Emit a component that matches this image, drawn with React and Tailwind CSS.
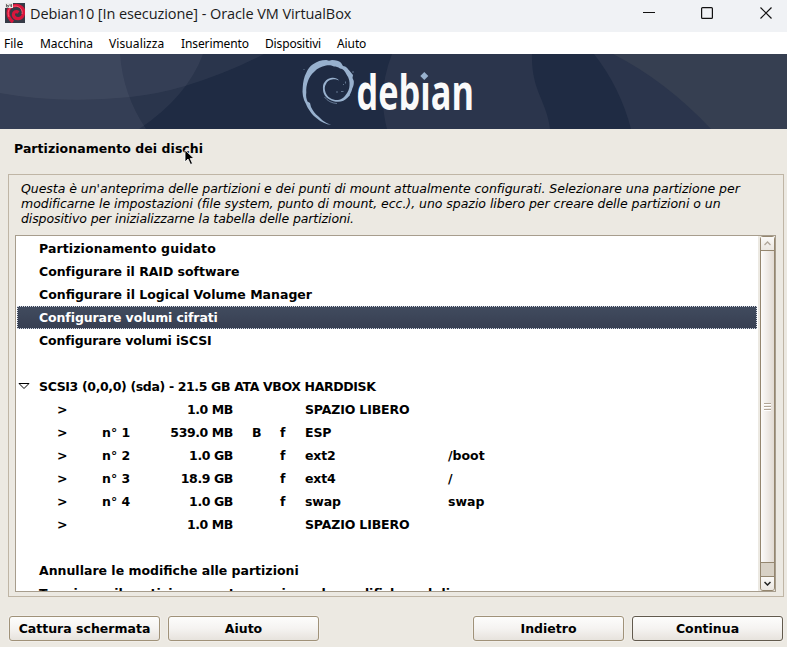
import React from "react";

function Banner() {
  return (
    <svg className="block h-[75px] w-full shrink-0" viewBox="0 0 787 75">
      <rect width="787" height="75" fill="#1f2b43" />
      <path d="M0 0H264Q228 19 185 32Q158 40 130 43Q60 50 0 39Z" fill="#aeb3bd" fillOpacity=".08" />
      <path d="M0 0H203Q187 43 139 75H0Z" fill="#aeb3bd" fillOpacity=".08" />
      <path d="M0 0H120Q123 41 146 75H0Z" fill="#aeb3bd" fillOpacity=".08" />
      <path d="M392 0Q377 38 387 75H550C547 47 531 37 532 0Z" fill="#2b354c" />
      <path d="M594 0Q620 33 631 75H787V0Z" fill="#2b354c" />
      <path d="M613 0Q666 27 711 75H787V0Z" fill="#363f51" />
      <path
        d="M331.300 70.700C326 70.500 321 68 317 64.500C312 61 308 55 306 50C303 45 302 39 302.700 33.700C303 28 304 23 306.300 18.700C308 15 310 12 313 10.300C317 7.500 321 6 326.300 6L329 6.700L332 6C336 6 339 7 341 8.800L343 12C346 12 348 15 349.700 17L353 21L352.500 24L353.800 27C354 30 353.500 32 352.300 34.500C351.500 38 350 41 348 43.200C345 46.500 342 47.500 338 47.800C335 47.800 332 47 329.500 45.500C325 43 323 39 323 35.500C322.800 32 323 30 324.700 28C326.500 25.500 329 24 332 23.800C335 23.500 337.500 24.500 339 26.500C336 25 334 25 332 25.500C329 26 327 27.500 326 30C324.800 32 324.500 34 325 36.500C325.800 40 327.500 42.500 330 44C333 45.800 335.500 46.300 338 46C341 45.500 343.500 44 345.300 41.500C348 38 349.500 35 349.500 31.500C349.900 28 349.200 24 346.500 20.500C345 17 343 14.800 340 14.500C338 13 336 12.500 334 12.500C331 11 328.500 11 326 11.600C321 12.500 317.500 14.500 314.500 17.500C311 20.500 309 24 308 27C306.500 31 306 35 306.300 38.500C305.700 42 306.500 45 307.500 47.500L310 49L311 53C313 57 315 60 318.500 62.500C322 66 325 69 331.300 70.700Z"
        fill="#98b1ce"
      />
      <path d="M324.500 43Q329 49 337 49.500M336 38h2M341 37.500h2.500M343 30.500h1M345.500 27.500v2M303.500 16l1-1M353 17v2M347 43l3-2" stroke="#98b1ce" strokeOpacity=".7" strokeWidth=".8" fill="none" />
      <text
        x="356.500" y="56" textLength="117.500" lengthAdjust="spacingAndGlyphs"
        className="font-['Open_Sans',sans-serif] text-[49px] font-bold" fill="#fafafa"
      >debian</text>
      <path d="M418 15h12v12.500h-12z" fill="#2b354c" />
      <path d="M424.300 18l4 4-4 4-4-4z" fill="#98b1ce" />
    </svg>
  );
}

function TitleBar() {
  return (
    <div className="flex h-8 shrink-0 items-start bg-[#f0f2f5]">
      <svg className="ml-[5px] mt-[3px] h-5 w-5" viewBox="0 0 20 20">
        <rect width="20" height="20" fill="#363b47" />
        <path d="M8 19C1 13 2 5 8 3C14 1 20 5 18.500 11C17 17 10 17 8.500 12.500C8 9 11 7.500 13.500 9.500" fill="none" stroke="#d9163c" strokeWidth="3.200" />
        <path d="M4 14C1.500 8 5 3.500 10 3C15 3 18 7 17 11" fill="none" stroke="#ff5872" strokeWidth="1" />
        <rect width="8" height="5" fill="#e8e8e8" />
        <path d="M1.500 1v3h2v-1.500h-2M5 1v2h2M6.500 1v3" fill="none" stroke="#555" strokeWidth=".8" />
      </svg>
      <span className="ml-[5px] mt-[4px] whitespace-nowrap font-['Open_Sans',sans-serif] text-[14.500px] leading-5 tracking-[-0.08px] text-[#1b1b1b]">Debian10 [In esecuzione] - Oracle VM VirtualBox</span>
      <svg className="ml-auto h-8 w-36" viewBox="0 0 144 32" fill="none" stroke="#111">
        <path d="M0 12.500h12" />
        <rect x="58.600" y="7.600" width="10.800" height="10.800" rx="1" strokeWidth="1.200" />
        <path d="M117.500 7.500l11 11m0-11l-11 11" strokeWidth="1.200" />
      </svg>
    </div>
  );
}

function MenuBar() {
  return (
    <div className="flex h-[22px] shrink-0 items-center whitespace-nowrap bg-white pl-1 pt-0.5 font-['Noto_Sans',sans-serif] text-[12px] leading-[22px] text-black">
      <span className="w-9">File</span>
      <span className="w-[69px] tracking-[-0.1px]">Macchina</span>
      <span className="w-[72px] tracking-[0.1px]">Visualizza</span>
      <span className="w-[84px] tracking-[-0.1px]">Inserimento</span>
      <span className="w-[72px] tracking-[-0.15px]">Dispositivi</span>
      <span className="tracking-[-0.1px]">Aiuto</span>
    </div>
  );
}

const partitions = [
  ["", "1.0 MB", "", "", "SPAZIO LIBERO", ""],
  ["n° 1", "539.0 MB", "B", "f", "ESP", ""],
  ["n° 2", "1.0 GB", "", "f", "ext2", "/boot"],
  ["n° 3", "18.9 GB", "", "f", "ext4", "/"],
  ["n° 4", "1.0 GB", "", "f", "swap", "swap"],
  ["", "1.0 MB", "", "", "SPAZIO LIBERO", ""],
];

function Row({ children, className = "" }) {
  return <div className={`h-[23px] pl-[22px] ${className}`}>{children}</div>;
}

function Partition({ cells }) {
  const [number, size, boot, use, type, mount] = cells;
  return (
    <div className="flex h-[23px] pl-10">
      <span className="w-[45px]">&gt;</span>
      <span className="w-[46px]">{number}</span>
      <span className="w-[85px] text-right tracking-[-0.4px]">{size}</span>
      <span className="ml-[19px] w-7">{boot}</span>
      <span className="w-[25px]">{use}</span>
      <span className="w-[143px] tracking-[-0.15px]">{type}</span>
      <span>{mount}</span>
    </div>
  );
}

function Scrollbar() {
  return (
    <div className="flex w-[18px] shrink-0 bg-[#ece9e2] pl-0.5">
      <div className="flex w-[15px] flex-col rounded-[3px] border border-[#94866f] bg-[#d8d1c5]">
        <div className="flex h-[14px] items-center justify-center border-b border-[#94866f] bg-gradient-to-b from-[#faf9f7] to-[#ebe7e1]">
          <svg className="h-[5px] w-[7px]" viewBox="0 0 7 5"><path d="M.5 4l3-3 3 3" fill="none" stroke="#b0a79a" strokeWidth="1.300" /></svg>
        </div>
        <div className="flex h-[312px] flex-col items-center justify-center gap-0.5 border-b border-[#94866f] bg-gradient-to-r from-[#fcfbfa] to-[#e2dbd3]">
          <i className="h-px w-[7px] bg-[#b2a697] shadow-[0_1px_0_#fff]" />
          <i className="h-px w-[7px] bg-[#b2a697] shadow-[0_1px_0_#fff]" />
          <i className="h-px w-[7px] bg-[#b2a697] shadow-[0_1px_0_#fff]" />
        </div>
        <div className="grow" />
        <div className="flex h-[14px] items-center justify-center rounded-b-[2px] border-t border-[#94866f] bg-gradient-to-b from-[#faf9f7] to-[#ebe7e1]">
          <svg className="h-[5px] w-[7px]" viewBox="0 0 7 5"><path d="M.5 1l3 3 3-3" fill="none" stroke="#222" strokeWidth="1.500" /></svg>
        </div>
      </div>
    </div>
  );
}

function Button({ children, strong }) {
  return (
    <button className={`h-[25px] w-[151px] shrink-0 rounded-[3px] border bg-gradient-to-b from-[#fdfdfc] via-[#f5f3f1] to-[#e7e3dd] text-[12.500px] font-bold leading-[23px] shadow-[0_0_0_1px_#f1eee9] ${strong ? "border-[#625a4d]" : "border-[#a09279]"}`}>
      {children}
    </button>
  );
}

export default function App() {
  return (
    <div className="flex h-[647px] w-[787px] flex-col overflow-hidden bg-[#ece9e2] font-['DejaVu_Sans',sans-serif] text-[12.500px] text-black">
      <TitleBar />
      <MenuBar />
      <Banner />
      <div className="relative h-[45px] shrink-0 pl-3.5 pt-3 font-bold leading-4">
        <h1 className="tracking-[0.05px]">Partizionamento dei dischi</h1>
        <svg className="absolute left-[184px] top-[20px] h-[18px] w-3" viewBox="0 0 12 18">
          <path d="M1 1v12l3-3 2.500 5.500 2-1L6.200 9.500H10Z" fill="#000" stroke="#fff" strokeWidth=".8" />
        </svg>
      </div>
      <main className="ml-2 flex h-[423px] w-[776px] shrink-0 flex-col border border-[#bfb5a5] pl-1.5">
        <p className="h-[60px] whitespace-nowrap pl-1.5 pt-1.5 italic leading-[15px] tracking-[-0.035px]">
          Questa è un'anteprima delle partizioni e dei punti di mount attualmente configurati. Selezionare una partizione per<br />
          modificarne le impostazioni (file system, punto di mount, ecc.), uno spazio libero per creare delle partizioni o un<br />
          <span className="tracking-[-0.1px]">dispositivo per inizializzarne la tabella delle partizioni.</span>
        </p>
        <section className="flex h-[357px] w-[761px] overflow-hidden border border-[#a79d8d] bg-white">
          <div className="h-[355px] w-[742px] shrink-0 overflow-hidden whitespace-nowrap pl-px pt-px font-bold leading-[23px]">
            <Row className="tracking-[0.1px]">Partizionamento guidato</Row>
            <Row className="tracking-[-0.04px]">Configurare il RAID software</Row>
            <Row>Configurare il Logical Volume Manager</Row>
            <div className="h-[23px] w-[740px] border border-dotted border-[#d5dae4] bg-[#3c4558] bg-gradient-to-b from-[#414b5e] to-[#373f52] pl-[21px] leading-[21px] tracking-[-0.1px] text-white">Configurare volumi cifrati</div>
            <Row className="tracking-[-0.13px]">Configurare volumi iSCSI</Row>
            <Row />
            <div className="flex h-[23px] items-center pl-px tracking-[-0.36px]">
              <svg className="mr-[9px] h-[7px] w-3" viewBox="0 0 12 7"><path d="M1 .5h10l-5 5Z" fill="white" stroke="black" /></svg>
              SCSI3 (0,0,0) (sda) - 21.5 GB ATA VBOX HARDDISK
            </div>
            {partitions.map((cells, i) => <Partition key={i} cells={cells} />)}
            <Row />
            <Row>Annullare le modifiche alle partizioni</Row>
            <Row>Terminare il partizionamento e scrivere le modifiche sul disco</Row>
          </div>
          <Scrollbar />
        </section>
      </main>
      <footer className="flex h-[50px] shrink-0 items-start pl-[9px] pr-1 pt-[19px]">
        <Button>Cattura schermata</Button>
        <div className="w-2 shrink-0" />
        <Button>Aiuto</Button>
        <div className="w-[154px] shrink-0" />
        <Button>Indietro</Button>
        <div className="w-2 shrink-0" />
        <Button strong>Continua</Button>
      </footer>
    </div>
  );
}
